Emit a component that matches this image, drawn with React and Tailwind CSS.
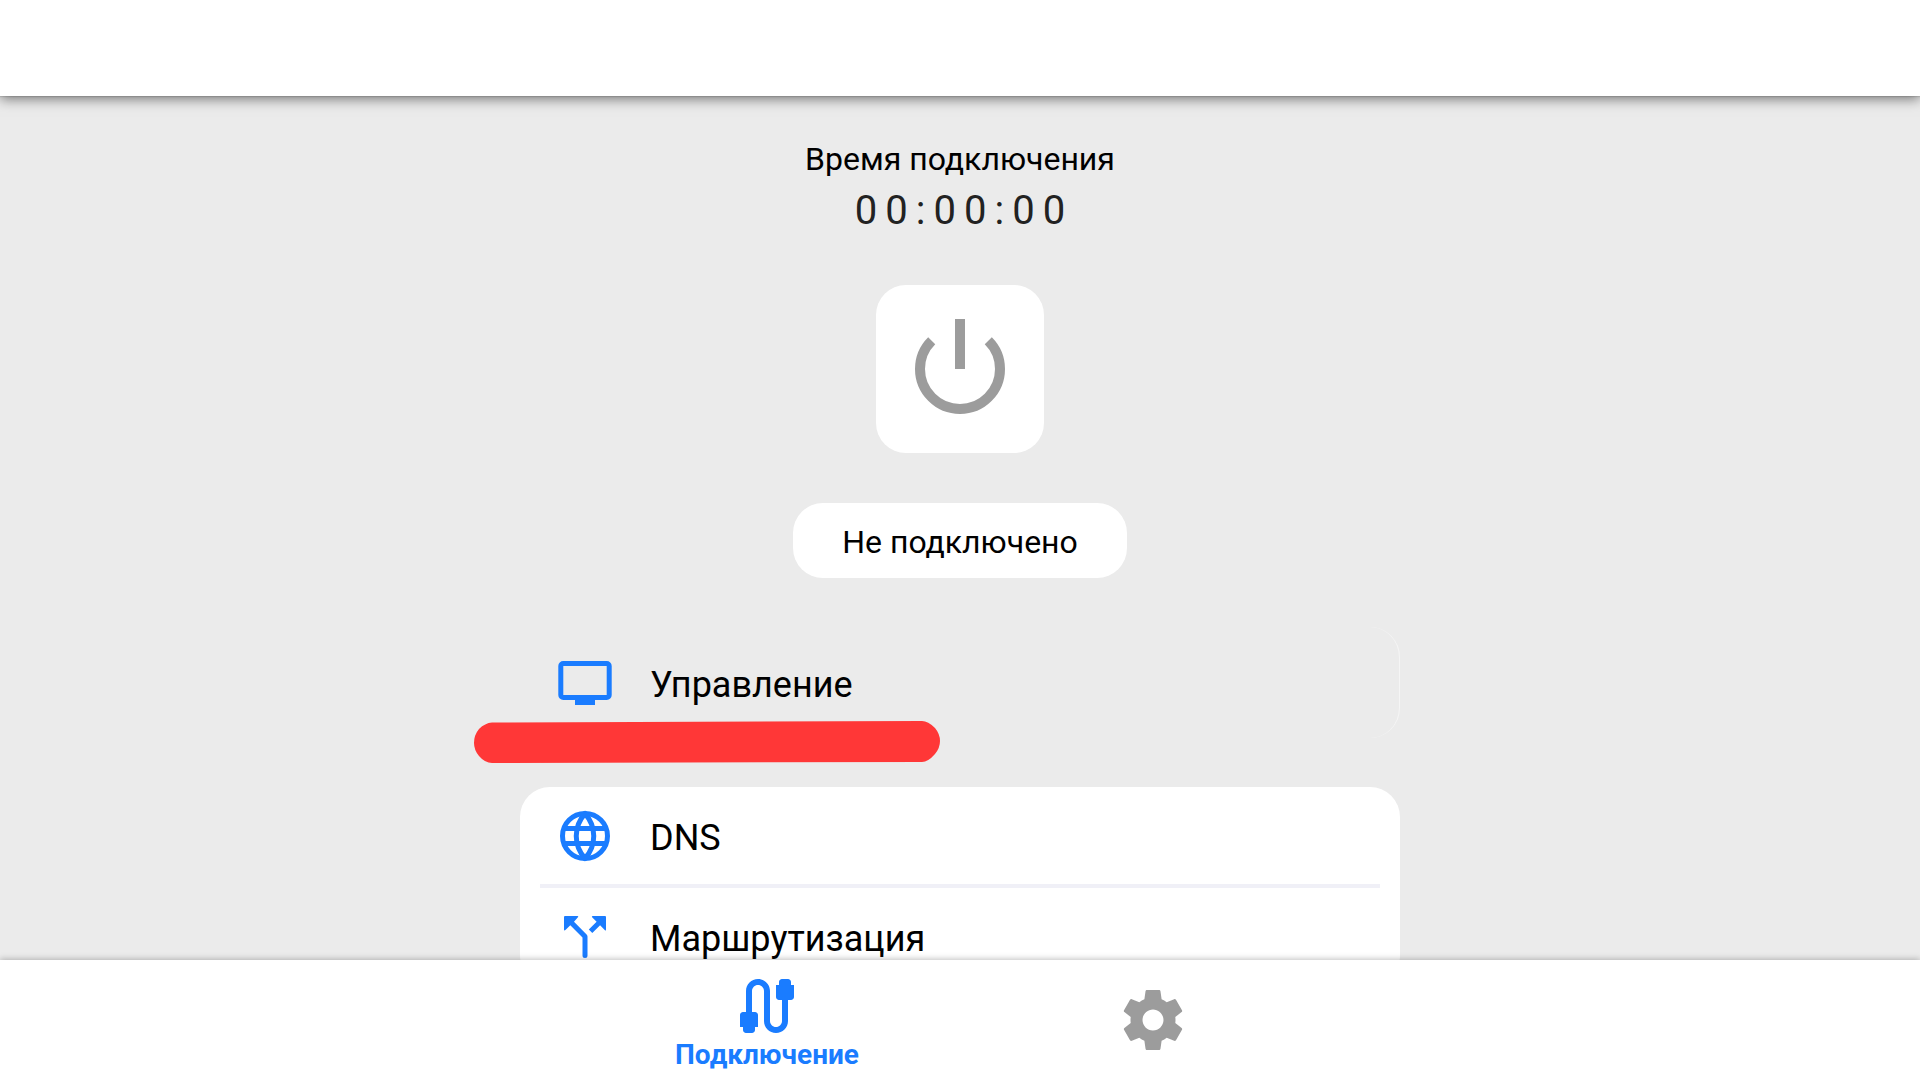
import { MdCable } from "react-icons/md";

function PowerIcon() {
    return (
        <svg className="size-30" viewBox="0 0 24 24" fill="none" stroke="currentColor" strokeWidth="2" aria-hidden="true">
            <path d="M12 2v10" />
            <path d="M6.343 6.343a8 8 0 1 0 11.314 0" />
        </svg>
    );
}

function ScreenIcon() {
    return (
        <svg className="size-15" viewBox="0 0 60 60" aria-hidden="true">
            <rect x="5.8" y="10.5" width="48.4" height="34" rx="2.5" fill="none" stroke="currentColor" strokeWidth="5" />
            <path d="M20 46h20v6H20z" fill="currentColor" />
        </svg>
    );
}

function GlobeIcon() {
    return (
        <svg className="size-15" viewBox="0 0 24 24" fill="none" stroke="currentColor" strokeWidth="2" aria-hidden="true">
            <circle cx="12" cy="12" r="9" />
            <path d="M3.500 9h17M3.500 15h17" />
            <path d="M12 3Q8.500 7 8.500 12T12 21Q15.500 17 15.500 12T12 3z" strokeLinejoin="round" />
        </svg>
    );
}

function SplitIcon() {
    return (
        <svg className="size-15" viewBox="0 0 60 60" fill="currentColor" aria-hidden="true">
            <path d="M10 9h12.4q1.6 0 .5 1.2L19 14.8 31.6 27.4q.9.9.9 2.1v19a2.5 2.5 0 0 1-5 0V30.5L15.3 18.3l-4.6 4.5Q9 24.3 9 22.5V10q0-1 1-1z" />
            <path d="M38 9h12q1 0 1 1v12.5q0 1.8-1.3.5l-4.6-4.7-7.8 7.8-3.5-3.5 7.8-7.8-4.5-4.6Q36.2 9 38 9z" />
        </svg>
    );
}

function GearIcon() {
    return (
        <svg className="size-18" viewBox="0 0 24 24" fill="currentColor" aria-hidden="true">
            <path d="M19.43 12.98c.04-.32.07-.64.07-.98s-.03-.66-.07-.98l2.11-1.65c.19-.15.24-.42.12-.64l-2-3.46c-.12-.22-.39-.3-.61-.22l-2.49 1c-.52-.4-1.08-.73-1.69-.98l-.38-2.65C14.46 2.18 14.25 2 14 2h-4c-.25 0-.46.18-.49.42l-.38 2.65c-.61.25-1.17.59-1.69.98l-2.49-1c-.23-.09-.49 0-.61.22l-2 3.46c-.13.22-.07.49.12.64l2.11 1.65c-.04.32-.07.65-.07.98s.03.66.07.98l-2.11 1.65c-.19.15-.24.42-.12.64l2 3.46c.12.22.39.3.61.22l2.49-1c.52.4 1.08.73 1.69.98l.38 2.65c.03.24.24.42.49.42h4c.25 0 .46-.18.49-.42l.38-2.65c.61-.25 1.17-.59 1.69-.98l2.49 1c.23.09.49 0 .61-.22l2-3.46c.12-.22.07-.49-.12-.64l-2.11-1.65zM12 15.5c-1.93 0-3.5-1.57-3.5-3.5s1.57-3.5 3.5-3.5 3.5 1.57 3.5 3.5-1.57 3.5-3.5 3.5z" />
        </svg>
    );
}

function MenuRow({ icon, label }) {
    return (
        <button type="button" className="flex w-full items-center gap-[35px] px-[35px] pt-[19px] pb-[18px] text-left">
            <span className="text-[#1a7cff]">{icon}</span>
            <span className="pt-1 text-4xl">{label}</span>
        </button>
    );
}

export default function App() {
    return (
        <div className="flex h-screen flex-col bg-[#ebebeb] font-[Roboto,sans-serif] text-black">
            <header className="z-10 h-24 shrink-0 bg-white shadow-[0_1px_1px_rgba(0,0,0,0.1),0_3px_12px_rgba(0,0,0,0.5)]" />

            <main className="flex min-h-0 flex-1 flex-col items-center overflow-hidden pt-[43px]">
                <p className="text-[32px] leading-10">Время подключения</p>
                <p className="mt-2 pl-2 text-[40px] leading-12 tracking-[8px] text-[#222222]">00:00:00</p>

                <button
                    type="button"
                    aria-label="Подключить"
                    className="mt-[50px] shrink-0 rounded-[30px] bg-white p-6 text-[#9c9c9c]"
                >
                    <PowerIcon />
                </button>

                <p className="mt-[50px] shrink-0 rounded-[30px] bg-white px-[49px] pt-[19px] pb-4 text-[32px] leading-10">
                    Не подключено
                </p>

                <div className="relative mt-[49px] w-full max-w-[880px] shrink-0 rounded-[30px] border-r border-[#f5f5f5] py-[7px]">
                    <MenuRow icon={<ScreenIcon />} label="Управление" />
                    {/* marker stroke under the first item */}
                    <svg
                        className="absolute top-[90px] -left-12 h-12 w-[472px]"
                        viewBox="0 0 472 48"
                        fill="#ff3737"
                        aria-hidden="true"
                    >
                        <path d="M20 5.500 450 4Q456 4 463 11 468 17 468 24 468 31 463 37 456 45 450 45L20 46Q13 46 7 39 2 33 2 26 2 18 7 12 13 6 20 5.500z" />
                    </svg>
                </div>

                <div className="mt-[49px] w-full max-w-[880px] shrink-0 rounded-[30px] bg-white">
                    <MenuRow icon={<GlobeIcon />} label="DNS" />
                    <hr className="mx-5 border-t-4 border-[#f0f0f7]" />
                    <MenuRow icon={<SplitIcon />} label="Маршрутизация" />
                </div>
            </main>

            <nav className="z-10 flex h-30 shrink-0 justify-center bg-white shadow-[0_-1px_6px_rgba(0,0,0,0.25)]">
                <a href="#connection" className="flex w-[386px] flex-col items-center pt-[10px] text-[#1a7cff]">
                    <MdCable className="size-18" />
                    <span className="text-[28px] leading-[26px] font-bold">Подключение</span>
                </a>
                <a href="#settings" aria-label="Настройки" className="flex w-[386px] items-center justify-center text-[#9c9c9c]">
                    <GearIcon />
                </a>
            </nav>
        </div>
    );
}
